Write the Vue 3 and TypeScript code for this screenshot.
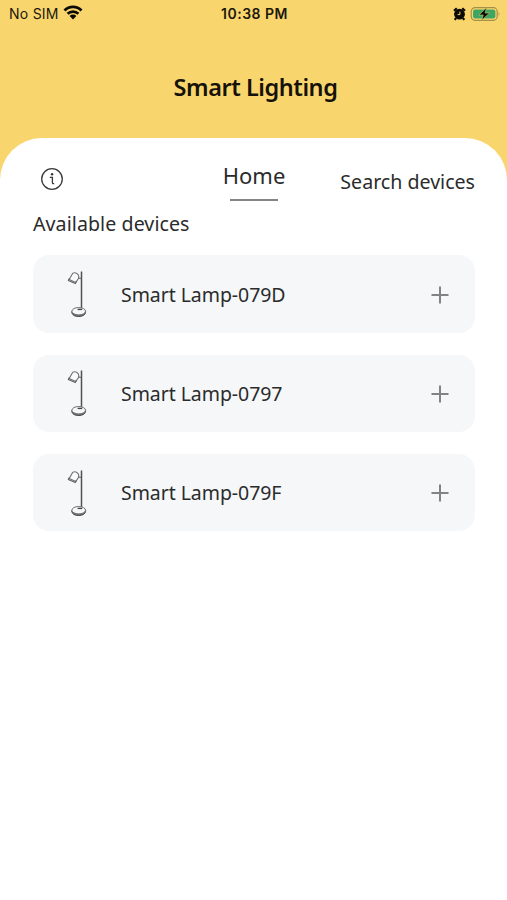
<script setup lang="ts">
interface Device {
  id: string
  name: string
}

const devices: Device[] = [
  { id: '079D', name: 'Smart Lamp-079D' },
  { id: '0797', name: 'Smart Lamp-0797' },
  { id: '079F', name: 'Smart Lamp-079F' },
]
</script>

<template>
  <div class="screen">
    <div class="status">
      <div class="status-left">
        <span class="carrier">No SIM</span>
        <svg class="wifi" width="20" height="15" viewBox="0 0 20 15">
          <g fill="none" stroke="#0c0a04" stroke-width="2.8">
            <path d="M1.5 5.4 A12 12 0 0 1 18.5 5.4" />
            <path d="M4.6 8.8 A7.7 7.7 0 0 1 15.4 8.8" />
          </g>
          <path d="M6.6 11 A4.8 4.8 0 0 1 13.4 11 L10 14.4 Z" fill="#0c0a04" />
        </svg>
      </div>
      <span class="time">10:38 PM</span>
      <div class="status-right">
        <svg class="alarm" width="13" height="14" viewBox="0 0 13 14">
          <circle cx="6.5" cy="7.2" r="5.4" fill="#0c0a04" />
          <path d="M1 3.8 L3.8 1.2 M12 3.8 L9.2 1.2 M3 11 L1.8 12.8 M10 11 L11.2 12.8" stroke="#0c0a04" stroke-width="2.2" />
          <path d="M6.9 4.6 V7.6 H4.6" fill="none" stroke="#f9d66d" stroke-width="1" />
        </svg>
        <svg width="31" height="16" viewBox="0 0 31 16">
          <rect x="1.2" y="1.7" width="26" height="12.6" rx="3.8" fill="#f9d66d" stroke="#a68e48" stroke-width="1.2" />
          <rect x="3" y="3.5" width="22.4" height="9" rx="2.2" fill="#3fa562" />
          <path d="M28.6 5.8 Q30.4 8 28.6 10.2 Z" fill="#a68e48" />
          <path d="M16.5 1.8 L8.8 9 H13.2 L11.8 14.2 L19.6 7 H15.2 Z" fill="#0c0a04" stroke="#b3c869" stroke-width=".7" />
        </svg>
      </div>
    </div>

    <h1 class="title">Smart Lighting</h1>

    <main class="sheet">
      <nav class="tabs">
        <button class="info" aria-label="Information">
          <svg width="24" height="24" viewBox="0 0 24 24" fill="none" stroke="#3a3a3a">
            <circle cx="12" cy="12" r="10.3" stroke-width="1.3" />
            <path d="M9.8 10.3 H12.4 V15.8 Q12.4 16.9 14.2 16.6" stroke-width="1.3" />
            <circle cx="12.1" cy="7.3" r="1.2" fill="#333" stroke="none" />
          </svg>
        </button>
        <div class="home">Home</div>
        <div class="search">Search devices</div>
      </nav>

      <h2 class="heading">Available devices</h2>

      <ul class="list">
        <li v-for="device in devices" :key="device.id" class="card">
          <svg class="lamp" width="22" height="48" viewBox="0 0 22 48" fill="none" stroke-linejoin="round">
            <path d="M14.5 1.5 V39.5" stroke="#505050" stroke-width="1.5" />
            <path d="M5.6 3.4 Q8.6 1.6 11.3 4.8 Q12.3 7 11.3 8.8 L8.8 12.4 L2.2 9.6 Z" fill="#fafbfc" stroke="#707070" stroke-width="1.1" />
            <path d="M2.3 8.4 L1.3 10.6 L8.3 13.6 L9.4 11.5 M11.6 8.3 H14.5" stroke="#606060" stroke-width="1.1" />
            <path d="M4.9 41 V43 Q6.2 46.5 11.8 46.5 Q17.8 46.3 18.6 42.4 V40.8" fill="#777" stroke="#444" stroke-width="1" />
            <ellipse cx="11.7" cy="41.2" rx="6.8" ry="3.7" fill="#f7f8f9" stroke="#707070" stroke-width="1" />
            <path d="M10.6 39.4 H15.2" stroke="#444" stroke-width="1.4" />
          </svg>
          <span class="name">{{ device.name }}</span>
          <button class="add" :aria-label="`Add ${device.name}`">
            <svg width="18" height="18" viewBox="0 0 18 18">
              <path d="M0.5 9 H17.5 M9 0.5 V17.5" stroke="#828385" stroke-width="2" />
            </svg>
          </button>
        </li>
      </ul>
    </main>
  </div>
</template>

<style>
body {
  margin: 0;
  background: #fff;
}
</style>

<style scoped>
.screen {
  display: flex;
  flex-direction: column;
  width: 507px;
  height: 900px;
  overflow: hidden;
  background: #f9d66d;
  color: #2b2b2b;
  font-family: "Noto Sans", "Open Sans", sans-serif;
}
.status {
  display: grid;
  grid-template-columns: 1fr auto 1fr;
  align-items: center;
  height: 27px;
  padding: 0 6px 0 9px;
  font-family: Inter, Roboto, sans-serif;
  font-size: 14px;
  line-height: 27px;
  color: #1c180c;
}
.status-left,
.status-right {
  display: flex;
  align-items: center;
}
.status-left {
  gap: 4px;
}
.carrier {
  letter-spacing: 0.25px;
}
.wifi {
  margin-top: -2px;
}
.status-right {
  justify-content: flex-end;
  gap: 4px;
}
.time {
  font-weight: 600;
  letter-spacing: 0.5px;
  margin-right: 1px;
}
.title {
  margin: 0;
  height: 111px;
  padding-left: 4px;
  font-size: 23.5px;
  font-weight: 600;
  line-height: 121px;
  letter-spacing: -0.45px;
  text-align: center;
  white-space: nowrap;
  color: #15120a;
}
.sheet {
  flex: 1;
  padding: 0 32px 0 33px;
  border-radius: 42px 42px 0 0;
  background: #fff;
}
.tabs {
  display: grid;
  grid-template-columns: 1fr auto 1fr;
  align-items: start;
  height: 63px;
}
button {
  display: flex;
  padding: 0;
  border: 0;
  background: none;
}
.info {
  margin: 29px 0 0 7px;
}
.home {
  display: flex;
  flex-direction: column;
  align-items: center;
  padding-top: 21px;
  font-size: 22px;
  line-height: 32px;
}
.home::after {
  content: "";
  width: 48px;
  height: 2px;
  margin-top: 8px;
  background: #858585;
}
.search {
  justify-self: end;
  padding-top: 29px;
  font-size: 19.6px;
  line-height: 30px;
  white-space: nowrap;
}
.heading {
  margin: 0;
  padding-top: 1px;
  font-size: 19.6px;
  font-weight: 400;
  line-height: 44px;
  letter-spacing: 0.07px;
}
.list {
  display: flex;
  flex-direction: column;
  gap: 21.8px;
  margin: 9.4px 0 0;
  padding: 0;
  list-style: none;
}
.card {
  display: flex;
  align-items: center;
  box-sizing: border-box;
  height: 77.5px;
  padding: 0 26px 0 34px;
  border-radius: 16px;
  background: #f5f7f9;
}
.name {
  flex: 1;
  margin-left: 32px;
  padding-top: 1px;
  font-size: 19.5px;
  line-height: 30px;
  letter-spacing: -0.06px;
}
.add {
  padding-top: 1px;
}
</style>
